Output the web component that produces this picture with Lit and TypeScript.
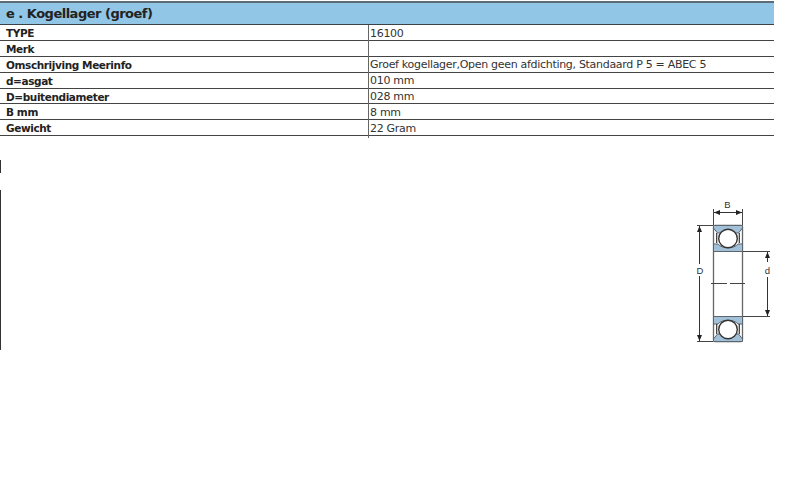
import { LitElement, html, css, svg } from "lit";
import { customElement } from "lit/decorators.js";

const rows: [string, string][] = [
  ["TYPE", "16100"],
  ["Merk", ""],
  ["Omschrijving Meerinfo", "Groef kogellager,Open geen afdichting, Standaard P 5 = ABEC 5"],
  ["d=asgat", "010 mm"],
  ["D=buitendiameter", "028 mm"],
  ["B mm", "8 mm"],
  ["Gewicht", "22 Gram"],
];

const race = (d: string) => svg`<path d=${d} fill="#a3c0d9" stroke="#5a6570" stroke-width="1"/>`;

const bearing = svg`
  <rect x="33.5" y="35.5" width="29" height="116" rx="1.5" fill="#fff" stroke="#666" stroke-width="1.3"/>
  ${race("M33.5 35.5H62.5V38L58.5 43H37.5L33.5 38Z")}
  ${race("M33.5 54H38C42 59 54 59 58 54H62.5V61.5H33.5Z")}
  ${race("M33.5 126.5H62.5V134H58C54 129 42 129 38 134H33.5Z")}
  ${race("M37.5 144H58.5L62.5 149V151.5H33.5V149Z")}
  <circle cx="48" cy="48.5" r="9.3" fill="#fff" stroke="#333" stroke-width="1.4"/>
  <circle cx="48" cy="139.5" r="9.3" fill="#fff" stroke="#333" stroke-width="1.4"/>
  <path d="M36.7 43V53M59.3 43V53M36.7 134V144M59.3 134V144" stroke="#333" stroke-width="1.2" fill="none"/>
  <path d="M31 93.5H47M50 93.5H65" stroke="#444" stroke-width="1" fill="none"/>
  <path d="M33.5 19V35M62.5 19V35M17 35.5H33M63 61.5H90M63 126.5H90M17 151.5H33" stroke="#444" stroke-width="1" fill="none"/>
  <path d="M34 22.5H62M19.5 36V74M19.5 86V151M87.5 62V72M87.5 87V126" stroke="#333" stroke-width="1" fill="none"/>
  <path d="M34 22.5L40 20V25ZM62 22.5L56 20V25ZM19.5 36L17 42H22ZM19.5 151L17 145H22ZM87.5 62L85 68H90ZM87.5 126L85 120H90Z" fill="#222"/>
  <text x="47.5" y="18" class="dim">B</text>
  <text x="20" y="84" class="dim">D</text>
  <text x="87.5" y="84" class="dim">d</text>
`;

@customElement("app-root")
export class AppRoot extends LitElement {
  static styles = css`
    :host {
      display: block;
      width: 800px;
      height: 500px;
      background: #fff;
      overflow: hidden;
      font-family: "DejaVu Sans", Verdana, sans-serif;
      color: #222;
    }
    .table {
      width: 774px;
      margin-top: 1px;
      border-top: 2px solid #5f6b75;
    }
    .title {
      height: 21px;
      background: #92c6e6;
      border-bottom: 1px solid #3a4248;
      padding-left: 6px;
      font-size: 13px;
      font-weight: bold;
      line-height: 21px;
      letter-spacing: -0.5px;
    }
    .row {
      display: grid;
      grid-template-columns: 368px 1fr;
      height: 15px;
      border-bottom: 1px solid #444;
      font-size: 11px;
      line-height: 16px;
    }
    .row.short {
      height: 14px;
    }
    .key {
      padding-left: 6px;
      font-size: 10.5px;
      font-weight: bold;
      letter-spacing: -0.4px;
    }
    .val {
      border-left: 1px solid #666;
      padding-left: 1px;
      color: #333;
      letter-spacing: -0.3px;
    }
    .val.low {
      padding-top: 1px;
      line-height: 15px;
    }
    .tail {
      margin-left: 368px;
      width: 1px;
      height: 2px;
      background: #666;
    }
    .stub {
      width: 1px;
      height: 13px;
      margin-top: 22px;
      background: #333;
    }
    .pane {
      margin-top: 17px;
      height: 160px;
      border-left: 1px solid #333;
    }
    .drawing {
      display: block;
      margin-left: 679px;
      width: 110px;
      height: 160px;
    }
    .dim {
      font: 9.5px "Liberation Sans", Arial, sans-serif;
      fill: #333;
      text-anchor: middle;
    }
  `;

  render() {
    return html`
      <div class="table">
        <div class="title">e . Kogellager (groef)</div>
        ${rows.map(
          ([k, v], i) => html`<div class="row ${i === 4 ? "short" : ""}">
            <div class="key">${k}</div>
            <div class="val ${i === 0 || i > 4 ? "low" : ""}">${v}</div>
          </div>`
        )}
        <div class="tail"></div>
      </div>
      <div class="stub"></div>
      <div class="pane">
        <svg class="drawing" viewBox="0 0 110 160">${bearing}</svg>
      </div>
    `;
  }
}
